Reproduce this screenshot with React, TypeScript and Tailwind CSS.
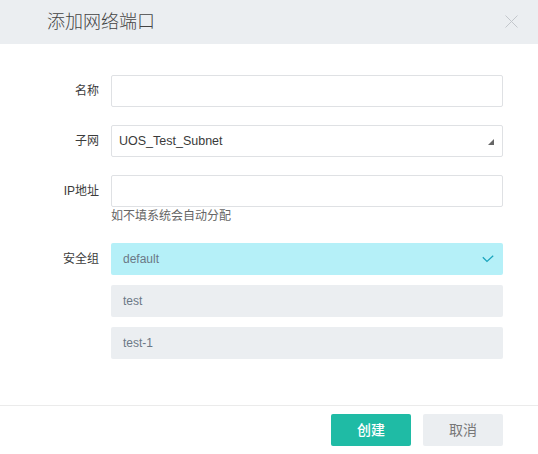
import React from "react";

const font = { fontFamily: '"Liberation Sans", "Noto Sans CJK SC", sans-serif' };

function Label({ children }: { children: React.ReactNode }) {
  return (
    <div className="w-[64px] shrink-0 text-right text-[12px] leading-[32px] text-[#3c3c3c]">
      {children}
    </div>
  );
}

export default function App() {
  return (
    <div className="w-[538px] h-[454px] bg-white flex flex-col overflow-hidden" style={font}>
      <div className="h-[44px] shrink-0 bg-[#ebeef1] flex items-center justify-between pl-[47px] pr-[20px]">
        <div className="text-[18px] text-[#444] font-light leading-none">添加网络端口</div>
        <svg width="13" height="13" viewBox="0 0 13 13" className="mt-[-1px]">
          <path d="M0.5 0.5 L12.5 12.5 M12.5 0.5 L0.5 12.5" stroke="#c3c7cc" strokeWidth="1" fill="none" />
        </svg>
      </div>

      <div className="flex-1 px-[35px] pt-[31px]">
        <div className="flex gap-[12px]">
          <Label>名称</Label>
          <div className="w-[392px] h-[32px] border border-[#dfe1e4] rounded-[2px] bg-white" />
        </div>

        <div className="flex gap-[12px] mt-[18px]">
          <Label>子网</Label>
          <div className="relative w-[392px] h-[32px] border border-[#dfe1e4] rounded-[2px] bg-white flex items-center pl-[7px] text-[12.5px] text-[#3a3a3a]">
            UOS_Test_Subnet
            <svg width="6" height="6" viewBox="0 0 6 6" className="absolute right-[8px] top-[13px]">
              <path d="M6 0 L6 6 L0 6 Z" fill="#666" />
            </svg>
          </div>
        </div>

        <div className="flex gap-[12px] mt-[18px]">
          <Label>IP地址</Label>
          <div className="flex flex-col">
            <div className="w-[392px] h-[32px] border border-[#dfe1e4] rounded-[2px] bg-white" />
            <div className="text-[12px] leading-[16px] text-[#666] mt-[1px]">如不填系统会自动分配</div>
          </div>
        </div>

        <div className="flex gap-[12px] mt-[19px]">
          <Label>安全组</Label>
          <div className="flex flex-col gap-[10px] w-[392px]">
            <div className="h-[32px] rounded-[2px] bg-[#b5f0f8] flex items-center justify-between pl-[12px] pr-[9px] text-[12px] text-[#6b7886]">
              <span>default</span>
              <svg width="12" height="8" viewBox="0 0 12 8">
                <path d="M0.8 2.2 L5 6.4 L11.2 0.8" stroke="#1ba5be" strokeWidth="1.3" fill="none" />
              </svg>
            </div>
            <div className="h-[32px] rounded-[2px] bg-[#ebeef1] flex items-center pl-[12px] text-[12px] text-[#6b7886]">
              test
            </div>
            <div className="h-[32px] rounded-[2px] bg-[#ebeef1] flex items-center pl-[12px] text-[12px] text-[#6b7886]">
              test-1
            </div>
          </div>
        </div>
      </div>

      <div className="h-[49px] shrink-0 border-t border-[#ebebeb] flex items-center justify-end gap-[12px] pr-[35px]">
        <button className="w-[80px] h-[32px] rounded-[2px] bg-[#1fbba5] text-white text-[14px] font-medium">
          创建
        </button>
        <button className="w-[80px] h-[32px] rounded-[2px] bg-[#ebeef1] text-[#777] text-[14px]">
          取消
        </button>
      </div>
    </div>
  );
}
